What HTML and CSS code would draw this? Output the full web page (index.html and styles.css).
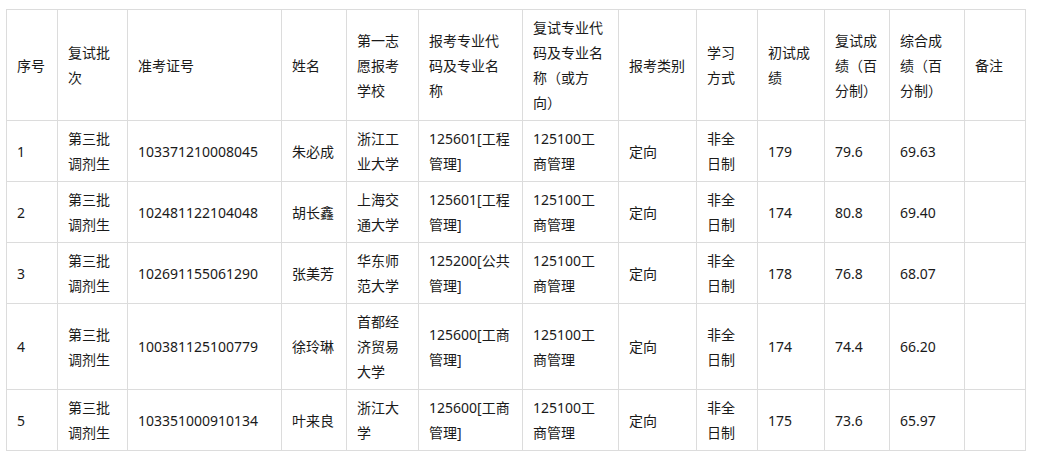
FILE: index.html
```html
<!DOCTYPE html>
<html lang="zh-CN">
<head>
<meta charset="utf-8">
<link rel="stylesheet" href="styles.css">
</head>
<body>
<div class="wrap">
<table class="grid">
<colgroup>
<col class="c1"><col class="c2"><col class="c3"><col class="c4"><col class="c5"><col class="c6"><col class="c7"><col class="c8"><col class="c9"><col class="c10"><col class="c11"><col class="c12"><col class="c13">
</colgroup>
<tr class="head">
<td>序号</td><td>复试批次</td><td>准考证号</td><td>姓名</td><td>第一志愿报考学校</td><td>报考专业代码及专业名称</td><td>复试专业代码及专业名称（或方向）</td><td>报考类别</td><td>学习方式</td><td>初试成绩</td><td>复试成绩（百分制）</td><td>综合成绩（百分制）</td><td>备注</td>
</tr>
<tr>
<td>1</td><td>第三批调剂生</td><td>103371210008045</td><td>朱必成</td><td>浙江工业大学</td><td>125601[工程管理]</td><td>125100工商管理</td><td>定向</td><td>非全日制</td><td>179</td><td>79.6</td><td>69.63</td><td></td>
</tr>
<tr>
<td>2</td><td>第三批调剂生</td><td>102481122104048</td><td>胡长鑫</td><td>上海交通大学</td><td>125601[工程管理]</td><td>125100工商管理</td><td>定向</td><td>非全日制</td><td>174</td><td>80.8</td><td>69.40</td><td></td>
</tr>
<tr>
<td>3</td><td>第三批调剂生</td><td>102691155061290</td><td>张美芳</td><td>华东师范大学</td><td>125200[公共管理]</td><td>125100工商管理</td><td>定向</td><td>非全日制</td><td>178</td><td>76.8</td><td>68.07</td><td></td>
</tr>
<tr>
<td>4</td><td>第三批调剂生</td><td>100381125100779</td><td>徐玲琳</td><td>首都经济贸易大学</td><td>125600[工商管理]</td><td>125100工商管理</td><td>定向</td><td>非全日制</td><td>174</td><td>74.4</td><td>66.20</td><td></td>
</tr>
<tr>
<td>5</td><td>第三批调剂生</td><td>103351000910134</td><td>叶来良</td><td>浙江大学</td><td>125600[工商管理]</td><td>125100工商管理</td><td>定向</td><td>非全日制</td><td>175</td><td>73.6</td><td>65.97</td><td></td>
</tr>
</table>
</div>
</body>
</html>
```
FILE: styles.css
```css
html, body {
  margin: 0;
  padding: 0;
  background: #fff;
}
.wrap {
  padding: 9px 0 0 6px;
}
.grid {
  border-collapse: collapse;
  table-layout: fixed;
  width: 1020px;
  font-family: "Noto Sans", "Noto Sans CJK SC", sans-serif;
  font-size: 14px;
  line-height: 25px;
  color: #1a1a1a;
}
.grid td {
  border: 1px solid #dcdcdc;
  padding: 5px 10px;
  vertical-align: middle;
  text-align: left;
  word-break: break-all;
}
.c1 { width: 51px; }
.c2 { width: 70px; }
.c3 { width: 154px; }
.c4 { width: 65px; }
.c5 { width: 72px; }
.c6 { width: 104px; }
.c7 { width: 96px; }
.c8 { width: 78px; }
.c9 { width: 61px; }
.c10 { width: 67px; }
.c11 { width: 65px; }
.c12 { width: 75px; }
.c13 { width: 61px; }
```
